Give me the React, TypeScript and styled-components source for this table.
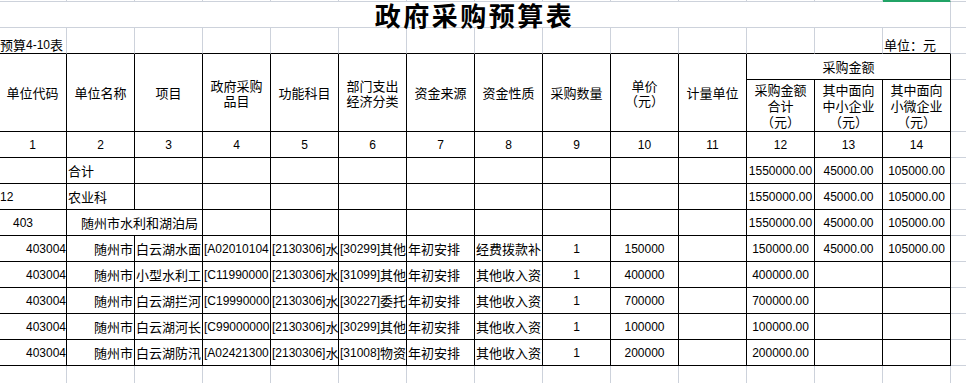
import React from "react";
import styled, { createGlobalStyle } from "styled-components";

const GRID = "#cdd2db";
const INK = "#000";
const SELECT = "#21a366";
const CJK_SPLIT = /([\u3000-\u303f\u4e00-\u9fff\uff00-\uffef]+)/;
const CJK_TEST = /[\u3000-\u303f\u4e00-\u9fff\uff00-\uffef]/;

const GlobalStyle = createGlobalStyle`
  html, body {
    margin: 0;
    padding: 0;
    background: #fff;
    overflow: hidden;
  }
  body {
    color: #000;
    font-family: "Liberation Sans", "Noto Sans CJK SC", sans-serif;
  }
`;

type Edge = "grid" | "ink" | "none" | "select";

const edge = (e: Edge) =>
  e === "none" ? "none" : `1px solid ${e === "grid" ? GRID : e === "ink" ? INK : SELECT}`;

// sheet is scrolled 1px to the right, so column A starts just off screen
const Sheet = styled.table`
  margin-left: -1px;
  width: 1000px;
  table-layout: fixed;
  border-collapse: separate;
  border-spacing: 0;
  font-size: 12px;
`;

const Col = styled.col`
  width: 68px;
`;

const Row = styled.tr<{ $h: number }>`
  height: ${(p) => p.$h}px;
`;

const Cell = styled.td<{
  $r?: Edge;
  $b?: Edge;
  $align?: "left" | "center";
  $indent?: number;
  $v?: "middle" | "bottom";
}>`
  box-sizing: border-box;
  padding: 0 1px 0 ${(p) => 1 + (p.$indent ?? 0) * 13}px;
  border-right: ${(p) => edge(p.$r ?? "grid")};
  border-bottom: ${(p) => edge(p.$b ?? "grid")};
  text-align: ${(p) => p.$align ?? "left"};
  vertical-align: ${(p) => p.$v ?? "middle"};
  white-space: nowrap;
  overflow: hidden;
  line-height: 16px;
`;

const StripCell = styled(Cell)<{ $selected?: boolean }>`
  background: ${(p) => (p.$selected ? SELECT : "transparent")};
  border-bottom-color: ${(p) => (p.$selected ? SELECT : GRID)};
`;

const TitleCell = styled(Cell)`
  font-family: "Noto Sans CJK SC", sans-serif;
  font-size: 26px;
  font-weight: 700;
  letter-spacing: 2.5px;
  line-height: 25px;
  text-align: center;
  vertical-align: bottom;
  overflow: visible;
`;

const HeadCell = styled(Cell)<{ $lh?: number }>`
  font-family: "Noto Sans CJK SC", sans-serif;
  font-size: 13px;
  line-height: ${(p) => p.$lh ?? 16}px;
  white-space: pre;
  text-align: center;
  border-right: 1px solid ${INK};
  border-bottom: 1px solid ${INK};
`;

const IndexCell = styled(Cell)`
  text-align: center;
  border-right: 1px solid ${INK};
  border-bottom: 1px solid ${INK};
`;

const Han = styled.span`
  font-family: "Noto Sans CJK SC", sans-serif;
  font-size: 13px;
  vertical-align: -1px;
`;

const Mixed = ({ text }: { text?: string }) => (
  <>
    {(text ?? "")
      .split(CJK_SPLIT)
      .filter(Boolean)
      .map((part, i) =>
        CJK_TEST.test(part) ? <Han key={i}>{part}</Han> : <React.Fragment key={i}>{part}</React.Fragment>
      )}
  </>
);

const HEAD = [
  "单位代码",
  "单位名称",
  "项目",
  "政府采购\n品目",
  "功能科目",
  "部门支出\n经济分类",
  "资金来源",
  "资金性质",
  "采购数量",
  "单价\n（元）",
  "计量单位",
];

const AMOUNT_HEAD = ["采购金额\n合计\n（元）", "其中面向\n中小企业\n（元）", "其中面向\n小微企业\n（元）"];

type Line = {
  code: string;
  codeIndent: number;
  name: string;
  nameIndent: number;
  span?: boolean;
  cells?: string[];
  qty?: string;
  price?: string;
  amounts: string[];
};

const TOTAL = ["1550000.00", "45000.00", "105000.00"];

const lines: Line[] = [
  { code: "", codeIndent: 0, name: "合计", nameIndent: 0, amounts: TOTAL },
  { code: "12", codeIndent: 0, name: "农业科", nameIndent: 0, amounts: TOTAL },
  { code: "403", codeIndent: 1, name: "随州市水利和湖泊局", nameIndent: 1, span: true, amounts: TOTAL },
  {
    code: "403004",
    codeIndent: 2,
    name: "随州市",
    nameIndent: 2,
    cells: ["白云湖水面", "[A02010104", "[2130306]水", "[30299]其他", "年初安排", "经费拨款补"],
    qty: "1",
    price: "150000",
    amounts: ["150000.00", "45000.00", "105000.00"],
  },
  {
    code: "403004",
    codeIndent: 2,
    name: "随州市",
    nameIndent: 2,
    cells: ["小型水利工", "[C11990000", "[2130306]水", "[31099]其他", "年初安排", "其他收入资"],
    qty: "1",
    price: "400000",
    amounts: ["400000.00"],
  },
  {
    code: "403004",
    codeIndent: 2,
    name: "随州市",
    nameIndent: 2,
    cells: ["白云湖拦河", "[C19990000", "[2130306]水", "[30227]委托", "年初安排", "其他收入资"],
    qty: "1",
    price: "700000",
    amounts: ["700000.00"],
  },
  {
    code: "403004",
    codeIndent: 2,
    name: "随州市",
    nameIndent: 2,
    cells: ["白云湖河长", "[C99000000", "[2130306]水", "[30299]其他", "年初安排", "其他收入资"],
    qty: "1",
    price: "100000",
    amounts: ["100000.00"],
  },
  {
    code: "403004",
    codeIndent: 2,
    name: "随州市",
    nameIndent: 2,
    cells: ["白云湖防汛", "[A02421300", "[2130306]水", "[31008]物资", "年初安排", "其他收入资"],
    qty: "1",
    price: "200000",
    amounts: ["200000.00"],
  },
];

const cols = Array.from({ length: 14 }, (_, i) => i);

export default function App() {
  return (
    <>
      <GlobalStyle />
      <Sheet>
        <colgroup>
          {cols.map((i) => (
            <Col key={i} />
          ))}
          <col />
        </colgroup>
        <tbody>
          <Row $h={2}>
            {cols.map((i) => (
              <StripCell key={i} $selected={i === 13} />
            ))}
            <Cell $r="none" />
          </Row>

          <Row $h={26}>
            <TitleCell colSpan={14}>政府采购预算表</TitleCell>
            <Cell $r="none" />
          </Row>

          <Row $h={26}>
            {cols.map((i) => (
              <Cell key={i} $b="ink" $v="bottom">
                {i === 0 && <Mixed text="预算4-10表" />}
                {i === 13 && <Mixed text="单位：元" />}
              </Cell>
            ))}
            <Cell $r="none" />
          </Row>

          <Row $h={26}>
            {HEAD.map((h, i) => (
              <HeadCell key={i} rowSpan={2} $lh={15}>
                {h}
              </HeadCell>
            ))}
            <HeadCell colSpan={3}>采购金额</HeadCell>
            <Cell $r="none" />
          </Row>
          <Row $h={52}>
            {AMOUNT_HEAD.map((h, i) => (
              <HeadCell key={i} $lh={16}>
                {h}
              </HeadCell>
            ))}
            <Cell $r="none" />
          </Row>

          <Row $h={26}>
            {cols.map((i) => (
              <IndexCell key={i}>{i + 1}</IndexCell>
            ))}
            <Cell $r="none" />
          </Row>

          {lines.map((ln, r) => (
            <Row $h={26} key={r}>
              <Cell $r="ink" $b="ink" $indent={ln.codeIndent}>
                <Mixed text={ln.code} />
              </Cell>
              <Cell $r="ink" $b="ink" $indent={ln.nameIndent} colSpan={ln.span ? 2 : 1}>
                <Mixed text={ln.name} />
              </Cell>
              {!ln.span && (
                <Cell $r="ink" $b="ink">
                  <Mixed text={ln.cells?.[0]} />
                </Cell>
              )}
              {[1, 2, 3, 4, 5].map((c) => (
                <Cell key={c} $r="ink" $b="ink">
                  <Mixed text={ln.cells?.[c]} />
                </Cell>
              ))}
              <Cell $r="ink" $b="ink" $align="center">
                {ln.qty}
              </Cell>
              <Cell $r="ink" $b="ink" $align="center">
                {ln.price}
              </Cell>
              <Cell $r="ink" $b="ink" />
              {[0, 1, 2].map((a) => (
                <Cell key={a} $r="ink" $b="ink" $align="center">
                  {ln.amounts[a] ?? ""}
                </Cell>
              ))}
              <Cell $r="none" />
            </Row>
          ))}

          <Row $h={20}>
            {cols.map((i) => (
              <Cell key={i} $b="none" />
            ))}
            <Cell $r="none" $b="none" />
          </Row>
        </tbody>
      </Sheet>
    </>
  );
}
